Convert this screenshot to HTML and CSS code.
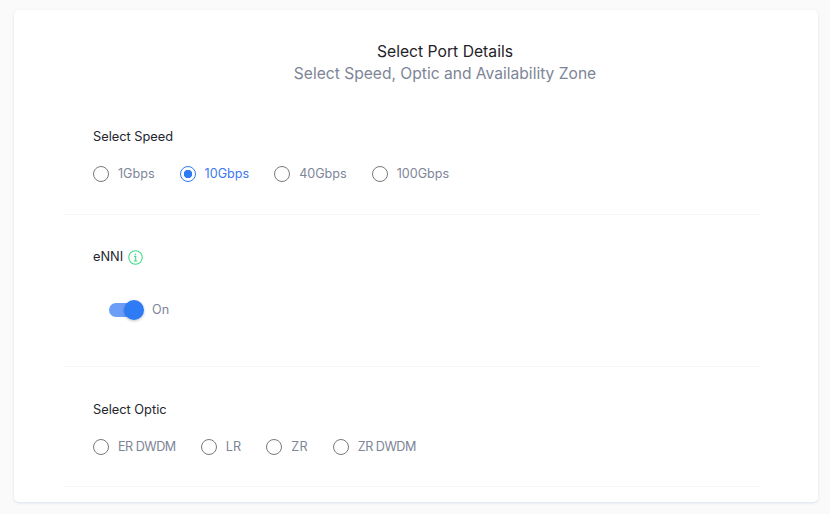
FILE: index.html
```html
<!DOCTYPE html>
<html lang="en">
<head>
<meta charset="utf-8">
<title>Select Port Details</title>
<link rel="stylesheet" href="styles.css">
</head>
<body>
<main class="card">
  <header class="head">
    <h1 class="title">Select Port Details</h1>
    <p class="subtitle">Select Speed, Optic and Availability Zone</p>
  </header>
  <section class="section speed">
    <h2 class="label">Select Speed</h2>
    <div class="radios">
      <label class="radio"><span class="dot"></span><span class="txt">1Gbps</span></label>
      <label class="radio on"><span class="dot"></span><span class="txt">10Gbps</span></label>
      <label class="radio"><span class="dot"></span><span class="txt">40Gbps</span></label>
      <label class="radio"><span class="dot"></span><span class="txt">100Gbps</span></label>
    </div>
  </section>
  <section class="section enni">
    <h2 class="label label-icon">eNNI
      <svg class="info" width="15" height="15" viewBox="0 0 16 16" fill="none" stroke="#3ddc84" stroke-width="1.1"><circle cx="8" cy="8" r="7.2"/><circle cx="8" cy="4.4" r=".8" fill="#3ddc84" stroke="none"/><path d="M6.5 6.8h1.7v4.9M6.2 11.8h3.6"/></svg>
    </h2>
    <div class="toggle-row">
      <span class="toggle"><span class="knob"></span></span>
      <span class="txt">On</span>
    </div>
  </section>
  <section class="section optic">
    <h2 class="label">Select Optic</h2>
    <div class="radios">
      <label class="radio"><span class="dot"></span><span class="txt tight">ER DWDM</span></label>
      <label class="radio"><span class="dot"></span><span class="txt">LR</span></label>
      <label class="radio"><span class="dot"></span><span class="txt">ZR</span></label>
      <label class="radio"><span class="dot"></span><span class="txt tight">ZR DWDM</span></label>
    </div>
  </section>
</main>
</body>
</html>
```
FILE: styles.css
```css
* { box-sizing: border-box; }
html, body { margin: 0; height: 100%; }
body {
  background: #fafafa;
  padding: 10px 12px 12px 14px;
  font-family: "Inter", "Liberation Sans", sans-serif;
  overflow: hidden;
}
.card {
  height: 492px;
  background: #fff;
  border-radius: 5px;
  box-shadow: 0 1px 3px rgba(150, 180, 220, .35);
  padding: 31px 58px 0 50px;
}
.head { text-align: center; padding-left: 66px; }
.title { margin: 0; font-size: 15.7px; line-height: 22px; font-weight: 400; color: #1f2229; }
.subtitle { margin: 0; font-size: 15.6px; line-height: 22px; color: #7d8597; }
.section { border-bottom: 1px solid #f6f6f6; padding-left: 29px; }
.speed { height: 130px; padding-top: 43px; }
.enni { height: 152px; padding-top: 33px; }
.optic { height: 120px; padding-top: 34px; }
.label { margin: 0; font-size: 12.8px; line-height: 18px; font-weight: 400; color: #22262e; }
.label-icon { display: flex; align-items: center; gap: 5px; }
.info { display: block; }
.radios { display: flex; gap: 25px; margin-top: 19px; }
.radio { display: flex; align-items: center; gap: 9px; height: 18px; }
.dot { width: 16px; height: 16px; border: 1.3px solid #77797c; border-radius: 50%; flex: none; }
.txt { font-size: 12.6px; line-height: 18px; color: #7d8597; }
.optic .txt { letter-spacing: .2px; }
.optic .tight { letter-spacing: -.5px; }
.radio.on .txt { color: #3b78f2; }
.radio.on .dot { border-color: #2f7bf5; background: radial-gradient(circle, #2f7bf5 0 4px, transparent 4.5px); }
.toggle-row { display: flex; align-items: center; gap: 9px; margin-top: 35px; padding-left: 16px; }
.toggle { position: relative; display: block; width: 34px; height: 14px; border-radius: 7px; background: #6c9df7; }
.knob { position: absolute; right: -1px; top: -3px; width: 20px; height: 20px; border-radius: 50%; background: #2f7bf5; box-shadow: 0 1px 3px rgba(0,0,0,.25); }
```
